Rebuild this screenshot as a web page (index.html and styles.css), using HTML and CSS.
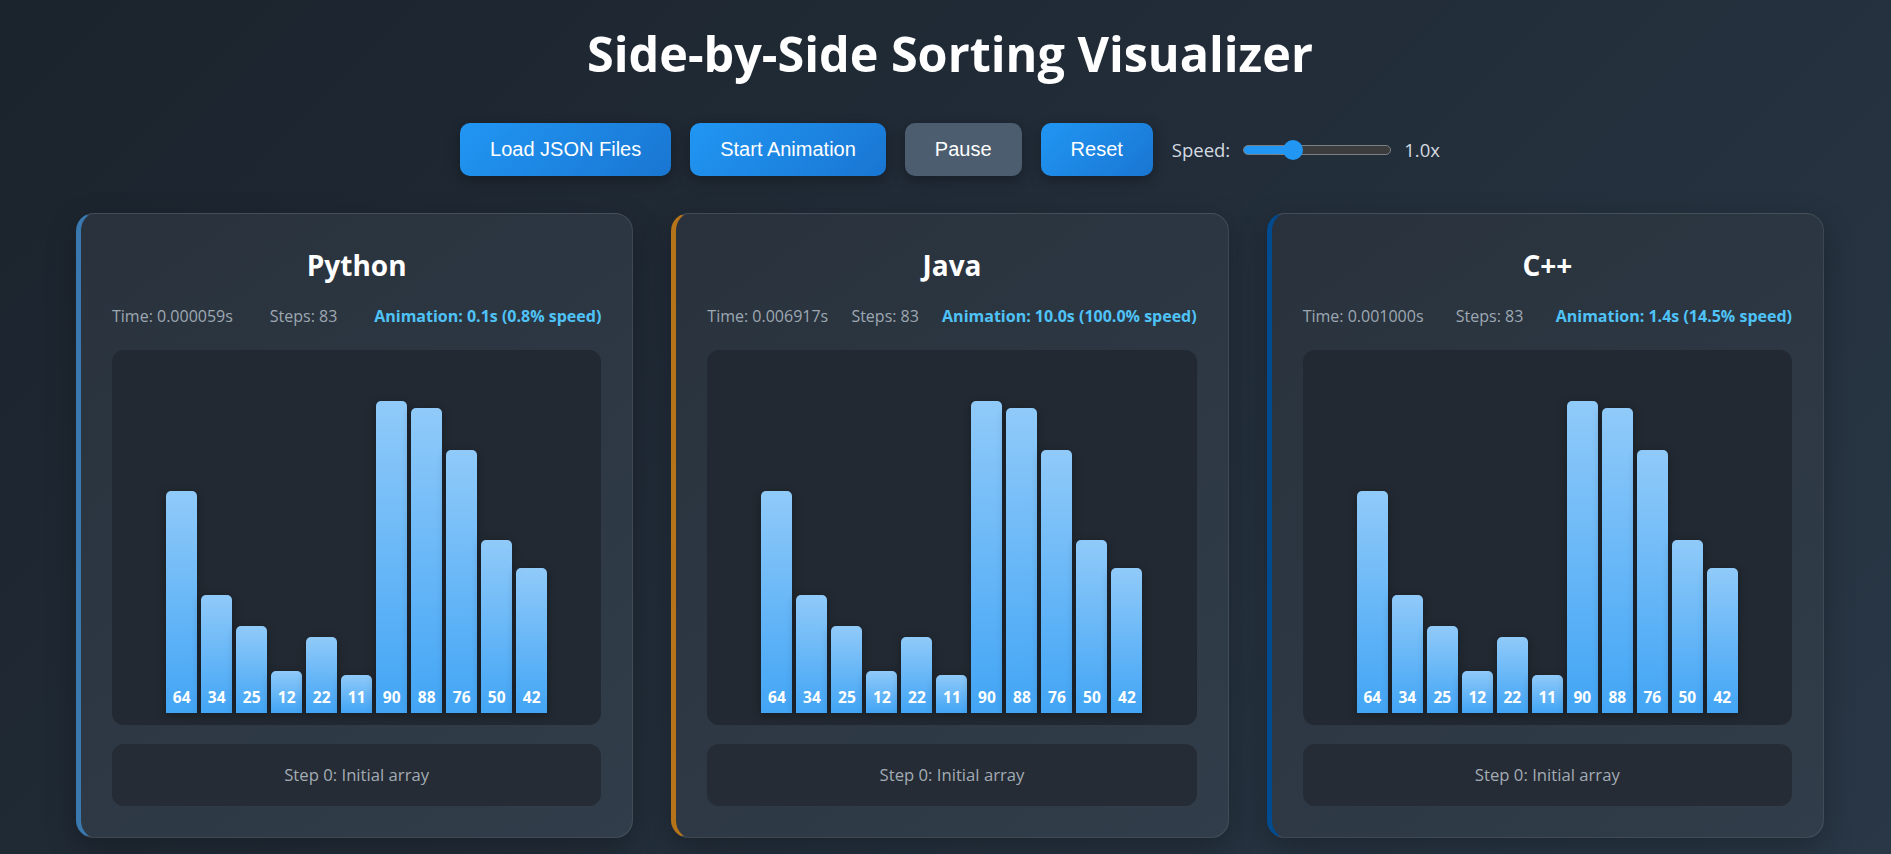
FILE: index.html
```html
<!DOCTYPE html>
<html lang="en">
<head>
<meta charset="utf-8">
<title>Side-by-Side Sorting Visualizer</title>
<link rel="stylesheet" href="styles.css">
</head>
<body>
<div class="page">
  <h1 class="title">Side-by-Side Sorting Visualizer</h1>
  <div class="controls">
    <button class="btn">Load JSON Files</button>
    <button class="btn">Start Animation</button>
    <button class="btn btn-pause">Pause</button>
    <button class="btn">Reset</button>
    <div class="speed">
      <span class="speed-label">Speed:</span>
      <input class="slider" type="range" min="0.1" max="3" step="0.1" value="1">
      <span class="speed-value">1.0x</span>
    </div>
  </div>

  <div class="cards">
    <section class="card card-python">
      <h2 class="card-title">Python</h2>
      <div class="stats">
        <span>Time: 0.000059s</span>
        <span>Steps: 83</span>
        <span class="anim">Animation: 0.1s (0.8% speed)</span>
      </div>
      <div class="chart">
        <div class="bar" style="height:222px">64</div>
        <div class="bar" style="height:118px">34</div>
        <div class="bar" style="height:87px">25</div>
        <div class="bar" style="height:42px">12</div>
        <div class="bar" style="height:76px">22</div>
        <div class="bar" style="height:38px">11</div>
        <div class="bar" style="height:312px">90</div>
        <div class="bar" style="height:305px">88</div>
        <div class="bar" style="height:263px">76</div>
        <div class="bar" style="height:173px">50</div>
        <div class="bar" style="height:145px">42</div>
      </div>
      <div class="step">Step 0: Initial array</div>
    </section>

    <section class="card card-java">
      <h2 class="card-title">Java</h2>
      <div class="stats">
        <span>Time: 0.006917s</span>
        <span>Steps: 83</span>
        <span class="anim">Animation: 10.0s (100.0% speed)</span>
      </div>
      <div class="chart">
        <div class="bar" style="height:222px">64</div>
        <div class="bar" style="height:118px">34</div>
        <div class="bar" style="height:87px">25</div>
        <div class="bar" style="height:42px">12</div>
        <div class="bar" style="height:76px">22</div>
        <div class="bar" style="height:38px">11</div>
        <div class="bar" style="height:312px">90</div>
        <div class="bar" style="height:305px">88</div>
        <div class="bar" style="height:263px">76</div>
        <div class="bar" style="height:173px">50</div>
        <div class="bar" style="height:145px">42</div>
      </div>
      <div class="step">Step 0: Initial array</div>
    </section>

    <section class="card card-cpp">
      <h2 class="card-title">C++</h2>
      <div class="stats">
        <span>Time: 0.001000s</span>
        <span>Steps: 83</span>
        <span class="anim">Animation: 1.4s (14.5% speed)</span>
      </div>
      <div class="chart">
        <div class="bar" style="height:222px">64</div>
        <div class="bar" style="height:118px">34</div>
        <div class="bar" style="height:87px">25</div>
        <div class="bar" style="height:42px">12</div>
        <div class="bar" style="height:76px">22</div>
        <div class="bar" style="height:38px">11</div>
        <div class="bar" style="height:312px">90</div>
        <div class="bar" style="height:305px">88</div>
        <div class="bar" style="height:263px">76</div>
        <div class="bar" style="height:173px">50</div>
        <div class="bar" style="height:145px">42</div>
      </div>
      <div class="step">Step 0: Initial array</div>
    </section>
  </div>
</div>
</body>
</html>
```

FILE: styles.css
```css
html, body {
  margin: 0;
  padding: 0;
}

body {
  min-height: 100vh;
  background: linear-gradient(135deg, #1b232c 0%, #222d39 50%, #293746 100%);
  font-family: "Open Sans", "Noto Sans", sans-serif;
  color: #fff;
  overflow: hidden;
}

.page {
  padding: 21px 67px 0 76px;
}

.title {
  margin: 0;
  text-align: center;
  font-size: 48.5px;
  line-height: 65px;
  font-weight: 700;
  color: #ffffff;
}

.controls {
  margin-top: 37px;
  display: flex;
  justify-content: center;
  align-items: center;
  gap: 19px;
}

.btn {
  font-family: "Liberation Sans", Arial, sans-serif;
  font-size: 20px;
  line-height: 23px;
  padding: 15px 30px;
  border: none;
  border-radius: 10px;
  color: #ffffff;
  background: linear-gradient(135deg, #2196f3 0%, #1976d2 100%);
  box-shadow: 0 4px 14px rgba(0, 0, 0, 0.3);
  cursor: pointer;
}

.btn-pause {
  background: #4b5d6e;
}

.speed {
  display: flex;
  align-items: center;
  gap: 13px;
  font-size: 18.5px;
  color: #d4dae0;
}

.slider {
  -webkit-appearance: none;
  appearance: none;
  width: 148px;
  height: 10px;
  margin: 0;
  border-radius: 5px;
  border: 1px solid #7a7f85;
  box-sizing: border-box;
  background: linear-gradient(to right, #2196f3 0%, #2196f3 31%, #3c3c3c 31%, #3c3c3c 100%);
  outline: none;
}

.slider::-webkit-slider-thumb {
  -webkit-appearance: none;
  appearance: none;
  width: 20px;
  height: 20px;
  border-radius: 50%;
  background: #2196f3;
  border: none;
}

.cards {
  margin-top: 37px;
  display: grid;
  grid-template-columns: repeat(3, 1fr);
  gap: 38px;
}

.card {
  border: 1px solid rgba(255, 255, 255, 0.1);
  border-left: 5px solid #3a78b0;
  border-radius: 18px;
  padding: 31px;
  background: linear-gradient(145deg, #29323c 0%, #2d3844 55%, #313d4a 100%);
  box-shadow: 0 10px 30px rgba(0, 0, 0, 0.25);
}

.card-java {
  border-left-color: #b5731a;
}

.card-cpp {
  border-left-color: #004a8f;
}

.card-title {
  margin: 1px 0 0;
  text-align: center;
  font-size: 28px;
  line-height: 38px;
  font-weight: 700;
  color: #ffffff;
}

.stats {
  margin-top: 21px;
  display: flex;
  justify-content: space-between;
  font-size: 16px;
  line-height: 22px;
  color: #9ea8b2;
  white-space: nowrap;
}

.anim {
  color: #4fc3f7;
  font-weight: 700;
}

.chart {
  margin-top: 23px;
  height: 375px;
  box-sizing: border-box;
  padding-bottom: 12.5px;
  background: #222932;
  border-radius: 12px;
  display: flex;
  align-items: flex-end;
  justify-content: center;
  gap: 4px;
}

.bar {
  width: 31px;
  box-sizing: border-box;
  border-radius: 5px 5px 0 0;
  background: linear-gradient(to bottom, #90caf9 0%, #42a5f5 100%);
  box-shadow: 0 2px 10px rgba(0, 0, 0, 0.3);
  display: flex;
  align-items: flex-end;
  justify-content: center;
  padding-bottom: 6px;
  font-size: 15.5px;
  line-height: 20px;
  font-weight: 700;
  color: #ffffff;
}

.step {
  margin-top: 19px;
  background: #252c35;
  border-radius: 12px;
  padding: 19px;
  text-align: center;
  font-size: 16.7px;
  line-height: 24px;
  color: #a3abb4;
}
```
